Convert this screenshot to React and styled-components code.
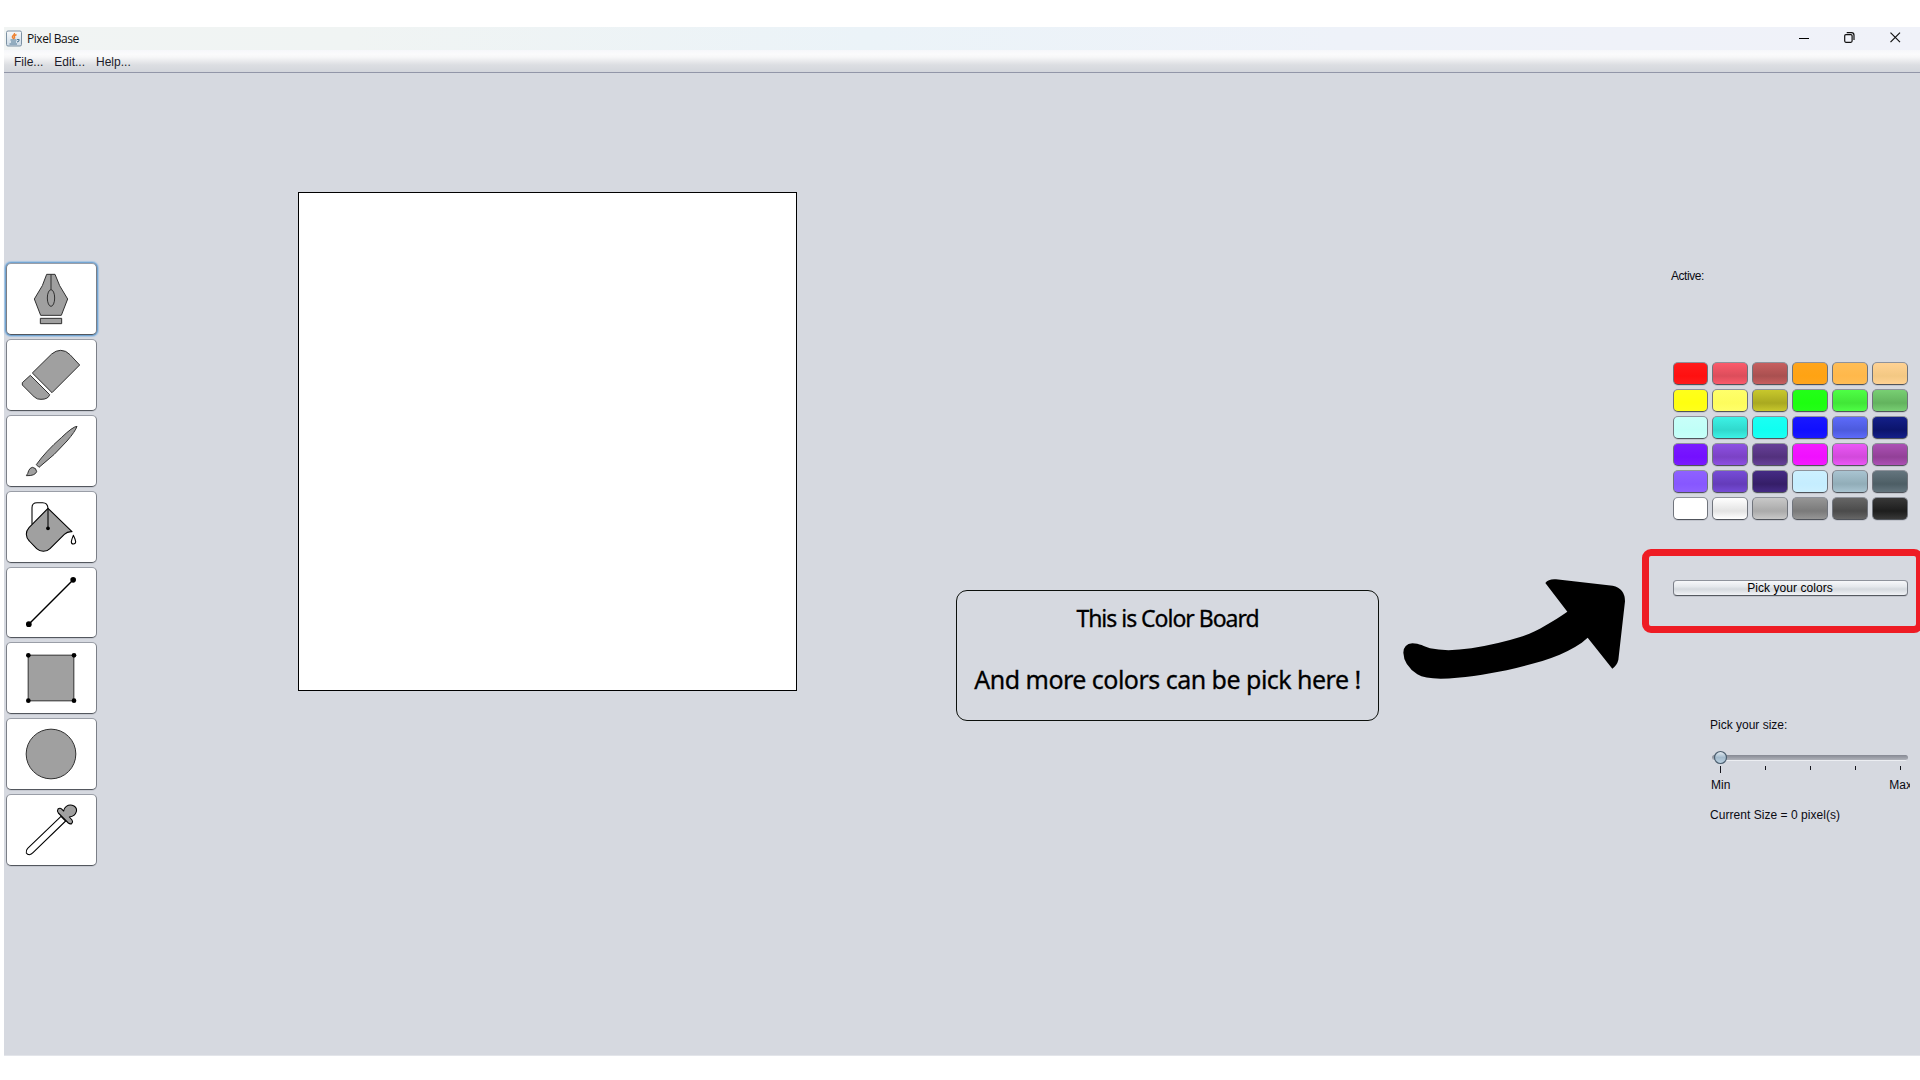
import React from "react";
import styled, { createGlobalStyle } from "styled-components";

const Global = createGlobalStyle`
  * { box-sizing: border-box; }
  body { margin: 0; background: #fff; overflow: hidden; }
`;

const Frame = styled.div`
  width: 1920px;
  height: 1080px;
  padding: 27px 0 24px 4px;
  overflow: hidden;
  font: 12px/16px "Liberation Sans", Arial, sans-serif;
  color: #0a0a12;
`;
const Window = styled.main`
  display: flex;
  flex-direction: column;
  height: 1029px;
  background: #d6d9e0;
  border-bottom: 1px solid #e3e5ea;
`;
const TitleBar = styled.header`
  display: flex;
  align-items: center;
  height: 23px;
  flex: none;
  padding: 0 19px 0 2px;
  background: linear-gradient(90deg, #f1f4f3 0, #f0f4f3 18%, #ebf3f8 45%, #eef2f9 70%, #f0f2f9 100%);
`;
const Title = styled.h1`
  flex: 1;
  margin: 0 0 0 5px;
  font: 400 12px/16px "Open Sans", "Noto Sans", sans-serif;
  letter-spacing: -0.45px;
  color: #111;
`;
const WindowControls = styled.div`
  display: flex;
  gap: 35px;
  margin-bottom: 3px;
  svg { display: block; }
`;
const MenuBar = styled.nav`
  display: flex;
  flex: none;
  gap: 11px;
  height: 23px;
  padding: 4px 0 0 10px;
  background: linear-gradient(#f6f7fa 0, #fbfbfc 20%, #f7f7f8 32%, #dcdee2 68%, #d3d6dc 100%);
  border-bottom: 1px solid #9296a8;
`;
const MenuItem = styled.span`
  color: #1c1c2a;
`;
const Workspace = styled.section`
  display: flex;
  align-items: flex-start;
  flex: 1;
`;
const Tools = styled.div`
  display: flex;
  flex-direction: column;
  gap: 4px;
  margin: 190px 0 0 2px;
`;
const ToolButton = styled.button`
  display: block;
  width: 91px;
  height: ${(p) => p.$height || 72}px;
  padding: 0;
  border: 1px solid;
  border-color: #9a9ea7 #7b7f87 #53575e;
  border-radius: 5px;
  background: #fff;
  box-shadow: ${(p) =>
    p.$active ? "0 0 0 1px #73a4d1, 0 0 1px 2px #a6c4e2" : "0 1px 0 #c5c8d0"};
  svg { display: block; margin: -1px; overflow: visible; }
`;
const Canvas = styled.div`
  width: 499px;
  height: 499px;
  margin: 119px 0 0 201px;
  background: #fff;
  border: 1px solid #000;
`;
const Callout = styled.div`
  width: 423px;
  height: 131px;
  margin: 517px 0 0 159px;
  border: 1px solid #0c100c;
  border-radius: 11px;
  color: #000;
  text-align: center;
  white-space: nowrap;
`;
const CalloutLine = styled.p`
  margin: ${(p) => p.$top}px 0 0;
  font: 400 ${(p) => p.$size}px/30px "Noto Sans", "Open Sans", sans-serif;
  letter-spacing: ${(p) => p.$track}px;
  -webkit-text-stroke: 0.3px #000;
`;
const Arrow = styled.svg`
  display: block;
  margin: 487px 0 0 11px;
  flex: none;
`;
const SidePanel = styled.aside`
  width: 249px;
  margin: 195px 0 0 31px;
  padding-left: 2px;
`;
const ActiveLabel = styled.div`
  margin-left: -2px;
  letter-spacing: -0.45px;
`;
const Palette = styled.div`
  display: grid;
  grid-template-columns: 35px repeat(5, 36px);
  grid-auto-rows: 23px;
  gap: 4px;
  margin-top: 78px;
`;
const Swatch = styled.button`
  padding: 0;
  border: 1px solid;
  border-color: #8e929b #70747c #50545b;
  border-radius: 5px;
  background: linear-gradient(${(p) => p.$top}, ${(p) => p.$mid} 62%, ${(p) => p.$bottom});
  box-shadow: 0 1px 0 #c1c4cc;
`;
const PickerRow = styled.div`
  position: relative;
  margin-top: 60px;
`;
const PickerButton = styled.button`
  display: flex;
  justify-content: center;
  width: 235px;
  height: 16px;
  padding: 0 1px 0 0;
  border: 1px solid;
  border-color: #8e929b #7a7e87 #555960;
  border-radius: 4px;
  background: linear-gradient(#f7f8fa, #e5e8ec 40%, #d5d9de 58%, #f1f3f6);
  box-shadow: 0 1px 0 #c1c4cc;
  font: 12px/14px "Liberation Sans", Arial, sans-serif;
  letter-spacing: 0.05px;
  color: #000;
`;
const Highlight = styled.div`
  position: absolute;
  left: -31.5px;
  top: -31px;
  width: 281px;
  height: 84px;
  border: 7px solid #ee1c24;
  border-radius: 9px;
  pointer-events: none;
`;
const SizePanel = styled.div`
  width: 200px;
  margin: 121px 0 0 37px;
  overflow: hidden;
`;
const Slider = styled.svg`
  display: block;
  margin-top: 16px;
`;
const ScaleLabels = styled.div`
  display: flex;
  justify-content: space-between;
  width: 202px;
  margin: 4px 0 14px;
  padding-left: 1px;
`;
const SizeReadout = styled.div`
  letter-spacing: 0.04px;
`;

const swatches = [
  ["#ff1b1b", "#ff1010"], ["#fb5b6b", "#dc4d5b"], ["#c75f5f", "#a95050"], ["#ffa51c", "#ffa313"], ["#ffbd55", "#ffb84b"], ["#ffd293", "#f3c883"],
  ["#ffff1b", "#ffff10"], ["#ffff6a", "#fdfc5d"], ["#c8c82c", "#a9a920"], ["#23ff18", "#1dff10"], ["#4eff45", "#41e637"], ["#78cf73", "#63b35e"],
  ["#c8fff9", "#c0fff7"], ["#3df2e6", "#30d9cd"], ["#1bfff3", "#10fff1"], ["#1918ff", "#100fff"], ["#5d6bfa", "#4c5add"], ["#142089", "#0b146c"],
  ["#7a1bff", "#7410ff"], ["#8d50e3", "#7b42c5"], ["#664098", "#53317d"], ["#f31bff", "#f010ff"], ["#eb57f6", "#d249db"], ["#ac51b5", "#924097"],
  ["#8e61ff", "#8757ff"], ["#764cd7", "#643cba"], ["#452b85", "#351e68"], ["#ccf0ff", "#c5edff"], ["#a9c4d1", "#91adb8"], ["#64757e", "#4d5e65"],
  ["#ffffff", "#ffffff"], ["#ffffff", "#e3e3e3"], ["#c8c8c8", "#aaaaaa"], ["#969696", "#7a7a7a"], ["#666666", "#4b4b4b"], ["#383838", "#1d1d1d"],
];

const fill = { fill: "#a0a0a0", stroke: "#303030", strokeWidth: 3, strokeLinejoin: "round" };
const bold = { fill: "#a0a0a0", stroke: "#000", strokeWidth: 3.2, strokeLinejoin: "round" };

const tools = [
  { name: "Pen", y: 24, art: (
    <g {...fill}>
      <path d="M140 58H165L179 92L203 132L184 181H122L103 132L127 92Z" />
      <path d="M153 58V104" />
      <ellipse cx="153" cy="129" rx="11" ry="25" />
      <path d="M121 190H185V206H121Z" />
    </g>) },
  { name: "Eraser", y: 252, art: (
    <g {...fill}>
      <path d="M97 354L155 297Q168 286 182 286Q198 286 210 299L239 330L156 413Z" />
      <path d="M91 361L149 419Q145 433 123 433Q112 434 103 426L67 390V383Z" />
    </g>) },
  { name: "Brush", y: 480, art: (
    <g {...fill}>
      <path d="M231 514Q226 529 201 558Q166 599 117 637L109 629Q137 589 184 548Q218 515 231 514Z" />
      <path d="M97 637Q109 638 110 650Q105 663 79 662Q84 656 86 647Q89 639 97 637Z" />
    </g>) },
  { name: "Fill", y: 708, art: (
    <g {...bold}>
      <path fill="none" d="M96 808V758Q96 743 111 743H128Q143 743 144 760" />
      <path d="M144 760L216 830Q202 829 193 838L150 881Q142 889 130 889Q119 889 110 881L88 858Q79 849 79 838Q79 827 87 818Z" />
      <path d="M144 760V817" />
      <circle cx="144" cy="820" r="4" fill="#000" />
      <path fill="#fff" d="M220 841Q215 853 214 860Q214 867 220 867Q227 866 227 860Q226 853 220 841Z" />
    </g>) },
  { name: "Line", y: 21, height: 71, art: (
    <g fill="#000">
      <path d="M87 192L219 60" stroke="#000" strokeWidth="4" />
      <circle cx="86.500" cy="192.500" r="8.500" /><circle cx="219.500" cy="59.500" r="8.500" />
    </g>) },
  { name: "Rectangle", y: 246, art: (
    <g fill="#000">
      <rect x="84.500" y="285.500" width="137" height="137" {...fill} />
      <circle cx="85" cy="286" r="7" /><circle cx="222" cy="286" r="7" />
      <circle cx="85" cy="422" r="7" /><circle cx="222" cy="422" r="7" />
    </g>) },
  { name: "Ellipse", y: 474, art: <circle cx="153" cy="582" r="74.500" {...fill} /> },
  { name: "Eyedropper", y: 702, art: (
    <g {...bold}>
      <path fill="#fff" d="M183 769L83 865Q77 871 79 879Q82 884 88 884Q94 883 99 878L197 783Z" />
      <path d="M174 747Q180 742 186 748L191 753Q191 745 199 739Q210 732 222 738Q232 745 229 755Q225 769 208 771L216 780Q220 786 215 791Q210 793 205 789L175 759Q170 753 174 747Z" />
    </g>) },
];

export default function App() {
  return (
    <Frame>
      <Global />
      <Window>
        <TitleBar>
          <svg width="16" height="17" viewBox="0 0 16 17" fill="none">
            <defs>
              <linearGradient id="java" x2="0" y2="1">
                <stop stopColor="#f9fafb" /><stop offset="1" stopColor="#cbdae6" />
              </linearGradient>
            </defs>
            <rect x=".5" y="1" width="15" height="15" rx="1.500" fill="url(#java)" stroke="#7c91a3" />
            <path d="M8.500 3C9 5 5.500 5.500 6.500 7.500L8 9M10.500 4.500C7.500 6 8 7 9 8.500" stroke="#ee8130" strokeWidth="1.400" />
            <path d="M4.500 10H10.500M5 12H10M3.500 14H11M11 9.500C14.500 9 13 11.500 11 12" stroke="#517894" strokeWidth="1.100" />
          </svg>
          <Title>Pixel Base</Title>
          <WindowControls>
            <svg width="10" height="11" viewBox="0 0 10 11" stroke="#000"><path d="M0 6.500H10" /></svg>
            <svg width="11" height="11" viewBox="0 0 11 11" fill="none" stroke="#111" strokeWidth="1.200">
              <rect x=".7" y="2.600" width="7.400" height="7.700" rx="1.200" />
              <path d="M2.700 .7H7.500Q10 .7 10 3.200V8" />
            </svg>
            <svg width="11" height="11" viewBox="0 0 11 11" stroke="#111" strokeWidth="1.200"><path d="M.5 .7L10 10.200M10 .7L.5 10.200" /></svg>
          </WindowControls>
        </TitleBar>
        <MenuBar>
          <MenuItem>File...</MenuItem>
          <MenuItem>Edit...</MenuItem>
          <MenuItem>Help...</MenuItem>
        </MenuBar>
        <Workspace>
          <Tools>
            {tools.map((t, i) => (
              <ToolButton key={t.name} aria-label={t.name} $active={i === 0} $height={t.height}>
                <svg width="91" height={t.height || 72} viewBox={`18 ${t.y} 273 ${(t.height || 72) * 3}`}>{t.art}</svg>
              </ToolButton>
            ))}
          </Tools>
          <Canvas />
          <Callout>
            <CalloutLine $top={12} $size={23} $track={-1.02}>This is Color Board</CalloutLine>
            <CalloutLine $top={31} $size={25} $track={-0.52}>And more colors can be pick here !</CalloutLine>
          </Callout>
          <Arrow width="250" height="130" viewBox="0 0 750 390">
            <path d="M466 69Q476 56 498 58L668 77Q705 85 705 124L685 300Q681 316 667 326L593 233C539 284 442 309 350 331C285 343 218 356 152 356Q103 356 82 343Q41 315 40 278Q41 252 67 250C88 250 103 260 120 265Q169 276 244 265Q325 252 388 232C434 218 487 186 532 155Z" />
          </Arrow>
          <SidePanel>
            <ActiveLabel>Active:</ActiveLabel>
            <Palette>
              {swatches.map(([a, b], i) => <Swatch key={i} $top={a} $mid={b} $bottom={a} />)}
            </Palette>
            <PickerRow>
              <PickerButton>Pick your colors</PickerButton>
              <Highlight />
            </PickerRow>
            <SizePanel>
              <div>Pick your size:</div>
              <Slider width="200" height="24" viewBox="0 0 200 24">
                <defs>
                  <linearGradient id="track" x2="0" y2="1">
                    <stop stopColor="#868993" /><stop offset=".5" stopColor="#9a9da6" /><stop offset="1" stopColor="#afb2ba" />
                  </linearGradient>
                  <linearGradient id="thumb" x2="0" y2="1">
                    <stop stopColor="#e6edf3" /><stop offset=".5" stopColor="#a4bbcd" /><stop offset="1" stopColor="#bdd3e3" />
                  </linearGradient>
                </defs>
                <rect x="3" y="7" width="194" height="5" rx="2.500" fill="#eceef2" />
                <rect x="2" y="6" width="196" height="5" rx="2.500" fill="url(#track)" />
                <circle cx="10.500" cy="8.500" r="6" fill="url(#thumb)" stroke="#4c5f70" strokeWidth="1.200" />
                <path d="M10.500 17V24M55.500 17V21M100.500 17V21M145.500 17V21M190.500 17V21" stroke="#15151c" />
              </Slider>
              <ScaleLabels><span>Min</span><span>Max</span></ScaleLabels>
              <SizeReadout>Current Size = 0 pixel(s)</SizeReadout>
            </SizePanel>
          </SidePanel>
        </Workspace>
      </Window>
    </Frame>
  );
}
